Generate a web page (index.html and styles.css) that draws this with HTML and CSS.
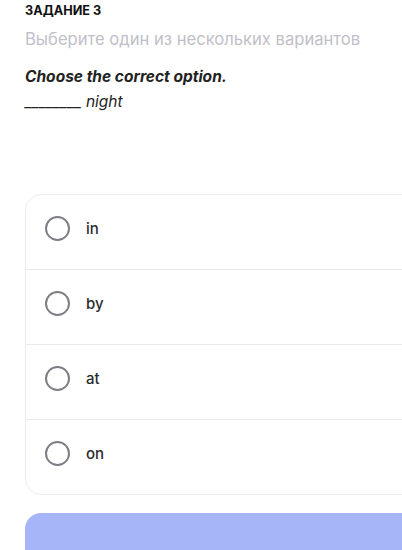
FILE: index.html
```html
<!DOCTYPE html>
<html lang="ru">
<head>
<meta charset="utf-8">
<link rel="stylesheet" href="styles.css">
</head>
<body>
<main class="page">
  <div class="task-label">ЗАДАНИЕ 3</div>
  <div class="task-hint">Выберите один из нескольких вариантов</div>
  <div class="question">
    <div class="q-title">Choose the correct option.</div>
    <div class="q-text">________ night</div>
  </div>
  <div class="options">
    <label class="option"><span class="radio"></span><span class="opt-text">in</span></label>
    <label class="option"><span class="radio"></span><span class="opt-text">by</span></label>
    <label class="option"><span class="radio"></span><span class="opt-text">at</span></label>
    <label class="option"><span class="radio"></span><span class="opt-text">on</span></label>
  </div>
  <button class="submit" type="button"></button>
</main>
</body>
</html>
```
FILE: styles.css
```css
html, body {
  margin: 0;
  padding: 0;
  background: #ffffff;
}
body {
  font-family: Inter, "Noto Sans", sans-serif;
  color: #111;
}
.page {
  height: 550px;
  overflow: hidden;
  padding: 3px 0 0 25px;
  display: flex;
  flex-direction: column;
}
.task-label {
  font-size: 12.7px;
  line-height: 16px;
  font-weight: 700;
  color: #111;
}
.task-hint {
  margin-top: 8px;
  font-size: 16.6px;
  line-height: 24px;
  color: #bfc0c8;
}
.question {
  margin-top: 13px;
  font-size: 15.5px;
  line-height: 25px;
  font-style: italic;
  color: #222;
}
.q-title {
  font-weight: 700;
}
.options {
  flex: none;
  margin-top: 80px;
  width: 420px;
  border: 1px solid #ececef;
  border-radius: 16px;
  display: flex;
  flex-direction: column;
}
.option {
  display: flex;
  align-items: center;
  gap: 16px;
  padding: 21px 19px 28px;
  border-top: 1px solid #eaeaed;
}
.option:first-child {
  border-top: none;
}
.radio {
  box-sizing: border-box;
  width: 25px;
  height: 25px;
  border: 2px solid #7e7e86;
  border-radius: 50%;
  flex: none;
}
.opt-text {
  font-size: 15px;
  line-height: 20px;
  font-weight: 500;
  color: #2b2b2e;
}
.submit {
  flex: none;
  margin-top: 18px;
  width: 420px;
  height: 60px;
  border: none;
  border-radius: 16px;
  background: #a5b5f7;
}
```
